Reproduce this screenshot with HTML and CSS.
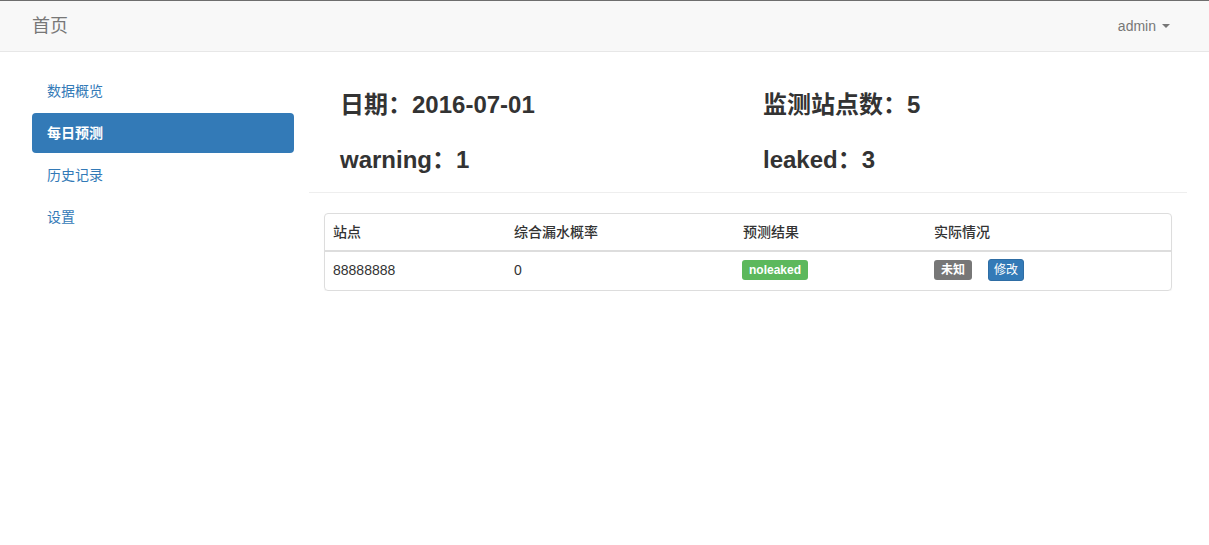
FILE: index.html
```html
<!DOCTYPE html>
<html lang="zh-CN">
<head>
<meta charset="utf-8">
<title>首页</title>
<link rel="stylesheet" href="styles.css">
</head>
<body>
<header class="navbar">
  <a class="brand" href="#">首页</a>
  <a class="user" href="#">admin<span class="caret"></span></a>
</header>
<div class="layout">
  <nav class="sidebar">
    <a class="pill" href="#">数据概览</a>
    <a class="pill active" href="#">每日预测</a>
    <a class="pill" href="#">历史记录</a>
    <a class="pill" href="#">设置</a>
  </nav>
  <main class="main">
    <div class="stats">
      <h3>日期：2016-07-01</h3>
      <h3>监测站点数：5</h3>
      <h3>warning：1</h3>
      <h3>leaked：3</h3>
    </div>
    <hr class="divider">
    <div class="panel">
      <table class="table">
        <thead>
          <tr>
            <th class="c1">站点</th>
            <th class="c2">综合漏水概率</th>
            <th class="c3">预测结果</th>
            <th>实际情况</th>
          </tr>
        </thead>
        <tbody>
          <tr>
            <td>88888888</td>
            <td>0</td>
            <td><div class="cell"><span class="label label-success">noleaked</span></div></td>
            <td><div class="cell"><span class="label label-default">未知</span><button class="btn">修改</button></div></td>
          </tr>
        </tbody>
      </table>
    </div>
  </main>
</div>
</body>
</html>
```
FILE: styles.css
```css
* { box-sizing: border-box; }
html, body { margin: 0; padding: 0; }
body {
  font-family: "Liberation Sans", "Noto Sans CJK SC", sans-serif;
  font-size: 14px;
  line-height: 20px;
  color: #333;
  background: #fff;
  border-top: 1px solid #6e6e6e;
}
a { text-decoration: none; }

.navbar {
  height: 51px;
  background: #f8f8f8;
  border-bottom: 1px solid #e7e7e7;
  display: flex;
  align-items: center;
  justify-content: space-between;
  padding: 0 39px 0 32px;
}
.brand {
  font-size: 18px;
  line-height: 20px;
  color: #777;
}
.user {
  color: #777;
  font-size: 14px;
  display: flex;
  align-items: center;
}
.caret {
  display: inline-block;
  width: 0;
  height: 0;
  margin-left: 6px;
  border-top: 4px solid #777;
  border-left: 4px solid transparent;
  border-right: 4px solid transparent;
}

.layout {
  display: flex;
  align-items: flex-start;
}
.sidebar {
  width: 262px;
  margin-left: 32px;
  padding-top: 19px;
  display: flex;
  flex-direction: column;
  gap: 2px;
}
.pill {
  display: block;
  padding: 10px 15px;
  line-height: 20px;
  border-radius: 4px;
  color: #337ab7;
}
.pill.active {
  background: #337ab7;
  color: #fff;
  font-weight: bold;
}

.main {
  width: 878px;
  margin-left: 15px;
  padding-top: 40px;
}
.stats {
  display: grid;
  grid-template-columns: 423px 1fr;
  row-gap: 29px;
  padding-left: 31px;
}
.stats h3 {
  margin: 0;
  font-size: 24px;
  line-height: 26px;
  font-weight: bold;
  color: #333;
}
.divider {
  margin: 19px 0 20px;
  border: 0;
  border-top: 1px solid #eee;
  height: 0;
}

.panel {
  margin: 0 15px;
  border: 1px solid #ddd;
  border-radius: 4px;
  box-shadow: 0 1px 1px rgba(0,0,0,.05);
  overflow: hidden;
}
.table {
  width: 100%;
  border-collapse: collapse;
  table-layout: fixed;
}
.table th, .table td {
  padding: 8px;
  text-align: left;
  line-height: 20px;
  vertical-align: middle;
}
.table td {
  padding-bottom: 10px;
}
.table th {
  font-weight: 500;
  border-bottom: 2px solid #ddd;
  color: #333;
}
.c1 { width: 181px; }
.c2 { width: 229px; }
.c3 { width: 191px; }
.cell {
  display: flex;
  align-items: center;
  height: 20px;
}
.label {
  display: inline-block;
  font-size: 12px;
  font-weight: bold;
  line-height: 14px;
  padding: 3px 7px;
  color: #fff;
  border-radius: 3px;
  white-space: nowrap;
}
.label-success { background: #5cb85c; margin-left: -1px; }
.label-default { background: #777; }
.btn {
  margin-left: 16px;
  font-family: inherit;
  font-size: 12px;
  line-height: 18px;
  padding: 1px 5px;
  border: 1px solid #2e6da4;
  border-radius: 3px;
  background: #337ab7;
  color: #fff;
  font-weight: normal;
  cursor: pointer;
}
```
